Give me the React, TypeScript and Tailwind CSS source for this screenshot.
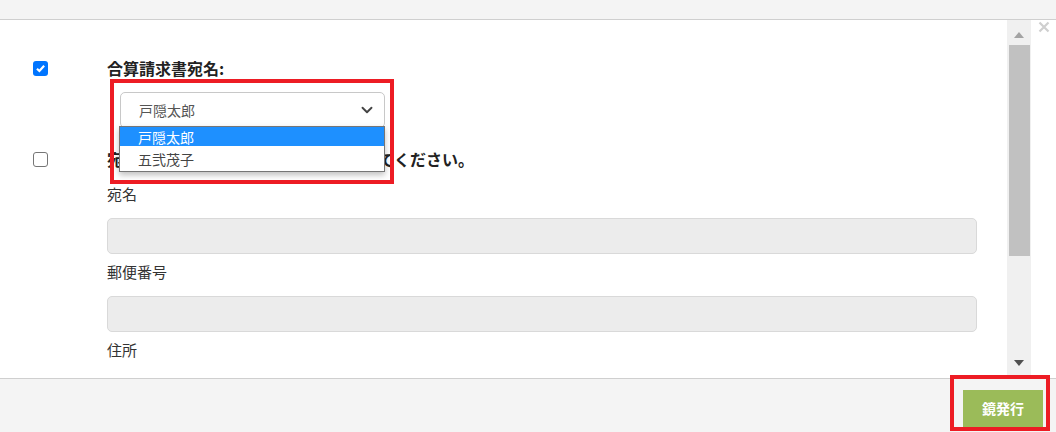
import { ChevronDown } from "lucide-react";

const font = { fontFamily: '"Noto Sans CJK JP", "Noto Sans", sans-serif' };

function CheckBox({ checked }: { checked?: boolean }) {
  return checked ? (
    <div className="w-[15px] h-[15px] rounded-[3px] bg-[#0075ff] flex items-center justify-center">
      <svg width="11" height="11" viewBox="0 0 10 10">
        <path d="M1.8 5.2 L4 7.3 L8.3 2.6" stroke="white" strokeWidth="2" fill="none" />
      </svg>
    </div>
  ) : (
    <div className="w-[15px] h-[15px] rounded-[3px] border border-[#767676] bg-white"></div>
  );
}

export default function App() {
  return (
    <div className="w-[1056px] h-[432px] flex flex-col bg-white text-[#333] relative overflow-hidden" style={font}>
      {/* top bar */}
      <div className="h-[20px] bg-[#f4f4f4] border-b border-[#cfcfcf] shrink-0"></div>

      {/* body */}
      <div className="flex h-[358px] shrink-0">
        <div className="w-[1007px] pt-[38px] pr-[30px]">
          {/* row 1 */}
          <div className="flex">
            <div className="w-[107px] pl-[33px] pt-[3px]">
              <CheckBox checked />
            </div>
            <div className="flex-1">
              <div className="text-[16px] leading-[20px] font-bold text-[#222]">合算請求書宛名:</div>
              <div className="relative mt-[14px] ml-[13px] w-[265px]">
                <div className="h-[36px] border border-[#c8c8c8] rounded-[5px] flex items-center justify-between pl-[18px] pr-[8px] text-[14px] text-[#555] bg-white">
                  <span>戸隠太郎</span>
                  <ChevronDown size={18} strokeWidth={2.5} className="text-[#444]" />
                </div>
                {/* open dropdown list */}
                <div className="absolute left-[-1px] top-[34px] w-[266px] bg-white border border-[#767676] shadow-[0_3px_6px_rgba(0,0,0,0.25)] z-20 text-[14px] leading-[20px]">
                  <div className="bg-[#1e90ff] text-white pl-[18px] h-[19px] flex items-center">戸隠太郎</div>
                  <div className="text-[#444] pl-[18px] h-[25px] flex items-center">五弐茂子</div>
                </div>
              </div>
            </div>
          </div>

          {/* row 2 */}
          <div className="flex mt-[21px]">
            <div className="w-[107px] pl-[33px] pt-[3px]">
              <CheckBox />
            </div>
            <div className="flex-1">
              <div className="text-[16px] leading-[20px] font-bold text-[#222]">
                宛名、郵便番号、住所を個別に入力してください。
              </div>
              <div className="text-[15px] leading-[20px] mt-[15px]">宛名</div>
              <div className="mt-[14px] h-[36px] rounded-[5px] bg-[#ececec] border border-[#d9d9d9]"></div>
              <div className="text-[15px] leading-[20px] mt-[8px]">郵便番号</div>
              <div className="mt-[14px] h-[36px] rounded-[5px] bg-[#ececec] border border-[#d9d9d9]"></div>
              <div className="text-[15px] leading-[20px] mt-[8px]">住所</div>
            </div>
          </div>
        </div>

        {/* scrollbar */}
        <div className="w-[24px] bg-[#f0f0f0] flex flex-col items-center">
          <div className="h-[25px] flex items-center justify-center pt-[4px]">
            <svg width="10" height="6" viewBox="0 0 10 6"><path d="M0 6 L5 0 L10 6 Z" fill="#a3a3a3" /></svg>
          </div>
          <div className="w-[21px] h-[211px] bg-[#c1c1c1]"></div>
          <div className="flex-1"></div>
          <div className="h-[24px] flex items-center justify-center pb-[6px]">
            <svg width="10" height="6" viewBox="0 0 10 6"><path d="M0 0 L10 0 L5 6 Z" fill="#505050" /></svg>
          </div>
        </div>

        {/* close */}
        <div className="flex-1 flex justify-center">
          <svg width="12" height="12" viewBox="0 0 12 12" className="mt-[1px]">
            <path d="M1.5 1.5 L10.5 10.5 M10.5 1.5 L1.5 10.5" stroke="#cfcfcf" strokeWidth="2.2" />
          </svg>
        </div>
      </div>

      {/* footer */}
      <div className="flex-1 bg-[#f4f4f4] border-t border-[#cfcfcf] flex justify-end items-start pt-[11px] pr-[13px]">
        <button className="w-[80px] h-[37px] bg-[#9bbb59] text-white font-bold text-[14px]">鏡発行</button>
      </div>

      {/* annotation boxes */}
      <div className="absolute left-[110px] top-[79px] w-[284px] h-[105px] border-[4px] border-[#ed1c24] z-30 pointer-events-none"></div>
      <div className="absolute left-[950px] top-[375px] w-[100px] h-[56px] border-[4px] border-[#ed1c24] z-30 pointer-events-none"></div>
    </div>
  );
}
